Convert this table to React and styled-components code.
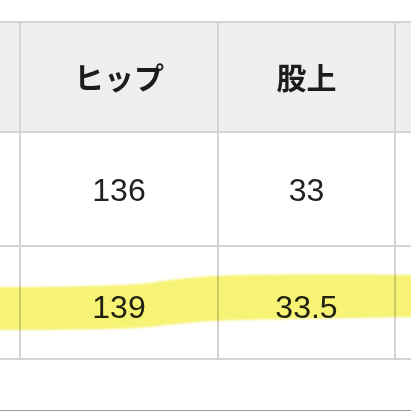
import React from "react";
import styled, { createGlobalStyle } from "styled-components";

const Global = createGlobalStyle`
  html, body { margin: 0; padding: 0; background: #ffffff; }
  body { width: 411px; height: 411px; overflow: hidden; }
`;

const Page = styled.div`
  position: relative;
  width: 411px;
  height: 411px;
  background: #fff;
  padding-top: 21px;
  box-sizing: border-box;
  display: flex;
  flex-direction: column;
`;

const Table = styled.div`
  display: grid;
  grid-template-columns: 21px 198px 177px 1fr;
  grid-template-rows: 110px 114px 111px;
  border-top: 2px solid #d4d4d4;
  border-bottom: 2px solid #d4d4d4;
`;

const Cell = styled.div`
  display: flex;
  align-items: center;
  justify-content: center;
  background: ${(p) => (p.$head ? "#efefef" : "#ffffff")};
  border-right: ${(p) => (p.$last ? "none" : "2px solid #d4d4d4")};
  border-bottom: ${(p) => (p.$lastRow ? "none" : "2px solid #d4d4d4")};
  box-sizing: border-box;
  color: #1c1c1c;
`;

const HeadText = styled.span`
  font-family: "Noto Sans CJK JP", "Noto Sans", sans-serif;
  font-weight: 700;
  font-size: 30px;
  line-height: 1;
  letter-spacing: 0;
  margin-top: -2px;
`;

const NumText = styled.span`
  font-family: "Liberation Sans", Arial, sans-serif;
  font-size: 32px;
  line-height: 1;
  color: #222;
  margin-top: ${(p) => p.$dy || 0}px;
`;

const Spacer = styled.div`
  flex: 1;
`;

const BottomRule = styled.div`
  height: 1px;
  background: #9a9a9a;
`;

const Highlight = styled.svg`
  position: absolute;
  left: 0;
  top: 0;
  width: 411px;
  height: 411px;
  pointer-events: none;
  mix-blend-mode: multiply;
`;

const rows = [
  { head: true, cells: ["", "ヒップ", "股上", ""] },
  { cells: ["", "136", "33", ""] },
  { cells: ["", "139", "33.5", ""] },
];

export default function App() {
  return (
    <>
      <Global />
      <Page>
        <Table>
          {rows.map((r, ri) =>
            r.cells.map((c, ci) => (
              <Cell
                key={`${ri}-${ci}`}
                $head={r.head}
                $last={ci === 3}
                $lastRow={ri === rows.length - 1}
              >
                {c &&
                  (r.head ? (
                    <HeadText>{c}</HeadText>
                  ) : (
                    <NumText $dy={ri === 2 ? 8 : 2}>{c}</NumText>
                  ))}
              </Cell>
            ))
          )}
        </Table>
        <Spacer />
        <BottomRule />
        <Highlight viewBox="0 0 411 411">
          <defs>
            <filter id="soft" x="-5%" y="-20%" width="110%" height="140%">
              <feGaussianBlur stdDeviation="1.2" />
            </filter>
          </defs>
          <path
            d="M -5 287 C 60 287, 120 286, 150 283 C 175 279, 200 276, 240 275 C 300 274, 360 274, 416 275 L 416 317 C 360 318, 300 319, 240 320 C 200 321, 175 324, 150 327 C 110 330, 50 330, -5 330 Z"
            fill="#f6f26a"
            opacity="0.92"
            filter="url(#soft)"
          />
        </Highlight>
      </Page>
    </>
  );
}
